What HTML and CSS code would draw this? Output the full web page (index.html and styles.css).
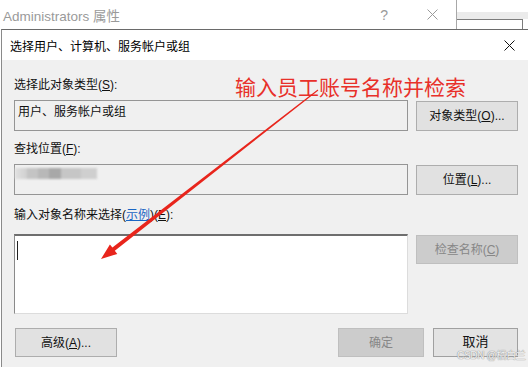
FILE: index.html
```html
<!DOCTYPE html>
<html lang="zh-CN">
<head>
    <meta charset="UTF-8">
    <meta name="viewport" content="width=device-width, initial-scale=1.0">
    <title>选择用户、计算机、服务帐户或组</title>
    <link rel="stylesheet" href="styles.css">
</head>
<body>
    <div class="screen">
        <!-- owner window behind the picker -->
        <div class="owner">
            <div class="owner-bar">
                <span class="owner-title">Administrators 属性</span>
                <span class="owner-help">?</span>
                <svg class="owner-close" width="11" height="11" viewBox="0 0 11 11">
                    <path d="M0.5 0.5 L10.5 10.5 M10.5 0.5 L0.5 10.5" stroke="#9a9a9a" stroke-width="1" fill="none"/>
                </svg>
            </div>
            <div class="owner-side">
                <div class="side-band"></div>
                <div class="side-frame"></div>
            </div>
        </div>

        <div class="dialog">
            <div class="dialog-title">
                <span>选择用户、计算机、服务帐户或组</span>
                <svg class="dialog-close" width="11" height="11" viewBox="0 0 11 11">
                    <path d="M0.5 0.5 L10.5 10.5 M10.5 0.5 L0.5 10.5" stroke="#111" stroke-width="1" fill="none"/>
                </svg>
            </div>

            <div class="dialog-body">
                <div class="field-label">选择此对象类型(<u>S</u>):</div>
                <div class="field-row">
                    <div class="text-box">用户、服务帐户或组</div>
                    <button type="button" class="side-button">对象类型(<u>O</u>)...</button>
                </div>

                <div class="field-label label-gap">查找位置(<u>F</u>):</div>
                <div class="field-row">
                    <div class="text-box"><span class="blurred"></span></div>
                    <button type="button" class="side-button">位置(<u>L</u>)...</button>
                </div>

                <div class="field-label label-gap-lg">输入对象名称来选择(<a href="#" class="link">示例</a>)(<u>E</u>):</div>
                <div class="field-row row-names">
                    <div class="name-area"><span class="caret"></span></div>
                    <button type="button" class="side-button check" disabled>检查名称(<u>C</u>)</button>
                </div>

                <div class="footer">
                    <button type="button" class="btn advanced">高级(<u>A</u>)...</button>
                    <button type="button" class="btn ok" disabled>确定</button>
                    <button type="button" class="btn cancel">取消</button>
                </div>
            </div>
        </div>

        <!-- red annotation drawn over the screenshot -->
        <div class="note">输入员工账号名称并检索</div>
        <svg class="arrow" width="528" height="367" viewBox="0 0 528 367">
            <polygon fill="#e8251c" points="317.7,89.6 112.4,247.6 109.9,244.5 101,259 117.3,253.9 114.8,250.8 318.3,90.4"/>
        </svg>

        <div class="watermark">CSDN @橘白兰</div>
    </div>
</body>
</html>
```

FILE: styles.css
```css
/* Windows object picker, on top of a properties window */
body {
    margin: 0;
    background-color: #fff;
    font-family: "Liberation Sans", "Noto Sans CJK SC", sans-serif;
    font-size: 12px;
    color: #111;
}
.screen {
    position: relative;
    width: 528px;
    height: 367px;
    overflow: hidden;
    background-color: #fff;
}

/* owner window */
.owner {
    display: flex;
    height: 29px;
}
.owner-bar {
    width: 457px;
    display: flex;
    align-items: center;
    padding-left: 3px;
    box-sizing: border-box;
    border-right: 1px solid #a8a8a8;
    color: #9a9a9a;
    font-size: 13.5px;
}
.owner-title {
    flex: 1;
}
.owner-help {
    font-size: 14px;
    margin-right: 39px;
}
.owner-close {
    margin-right: 18px;
}
.owner-side {
    flex: 1;
    padding-top: 12px;
}
.side-band {
    height: 7px;
    background-color: #ebebeb;
}
.side-frame {
    height: 9px;
    margin-right: 5px;
    border-top: 1px solid #7c7c7c;
    border-right: 1px solid #7c7c7c;
}

/* picker dialog */
.dialog {
    margin-left: 1px;
    border-top: 1px solid #6a6a6a;
    border-left: 1px solid #8a8a8a;
    height: 337px;
    display: flex;
    flex-direction: column;
}
.dialog-title {
    height: 30px;
    display: flex;
    align-items: center;
    padding: 0 13px 0 8px;
    background-color: #fff;
    font-family: "Noto Sans CJK SC", sans-serif;
    font-size: 12px;
    color: #000;
}
.dialog-title span {
    flex: 1;
}
.dialog-body {
    flex: 1;
    background-color: #f0f0f0;
    padding: 17px 10px 0 12px;
}
.field-label {
    height: 16px;
    line-height: 16px;
    color: #111;
}
.label-gap {
    margin-top: 10px;
}
.label-gap-lg {
    margin-top: 12px;
}
.link {
    color: #1a66c4;
    text-decoration: underline;
}
.field-row {
    display: flex;
    gap: 8px;
    margin-top: 7px;
    align-items: flex-start;
}
.row-names {
    margin-top: 11px;
}
.text-box {
    width: 394px;
    height: 31px;
    box-sizing: border-box;
    border: 1px solid #959595;
    padding: 3px 3px;
    line-height: 16px;
    background-color: #f0f0f0;
    color: #111;
}
.blurred {
    display: block;
    width: 82px;
    height: 11px;
    margin: 0 0 0 -3px;
    background: linear-gradient(90deg, #e0e0e0 0, #d0d0d0 12px, #c4c4c4 12px, #c4c4c4 23px, #b8b8b8 23px, #b8b8b8 34px, #a8a8a8 34px, #a8a8a8 46px, #c6c6c6 46px, #c6c6c6 66px, #cfcfcf 66px);
    filter: blur(1px);
}
.name-area {
    width: 394px;
    height: 80px;
    box-sizing: border-box;
    border-top: 2px solid #6e6e6e;
    border-left: 1px solid #8a8a8a;
    border-right: 1px solid #dcdcdc;
    border-bottom: 1px solid #dcdcdc;
    background-color: #fff;
    padding: 5px 0 0 2px;
}
.caret {
    display: block;
    width: 1px;
    height: 19px;
    background-color: #222;
}

/* buttons */
button {
    font-family: "Liberation Sans", "Noto Sans CJK SC", sans-serif;
    font-size: 12px;
    line-height: 14px;
    color: #111;
    background-color: #e1e1e1;
    border: 1px solid #adadad;
    padding: 0;
    box-sizing: border-box;
}
button:disabled {
    background-color: #cccccc;
    border-color: #bfbfbf;
    color: #878787;
}
.side-button {
    width: 102px;
    height: 30px;
    margin-top: 1px;
}
.check {
    height: 29px;
}
.footer {
    display: flex;
    margin-top: 14px;
}
.btn {
    height: 29px;
}
.advanced {
    width: 102px;
    margin-left: 1px;
}
.ok {
    width: 86px;
    margin-left: auto;
}
.cancel {
    width: 85px;
    margin-left: 9px;
    border-color: #a0a0a0;
    background-color: #e3e3e3;
    font-size: 13px;
    padding-bottom: 2px;
}

/* annotation overlay */
.note {
    position: absolute;
    left: 235px;
    top: 72px;
    font-family: "Noto Sans CJK SC", sans-serif;
    font-size: 21px;
    line-height: 28px;
    color: #e8302a;
    white-space: nowrap;
}
.arrow {
    position: absolute;
    left: 0;
    top: 0;
}
.watermark {
    position: absolute;
    left: 457px;
    top: 351px;
    font-size: 10px;
    line-height: 10px;
    letter-spacing: -0.3px;
    color: rgba(255, 255, 255, 0.9);
    text-shadow: 0 0 1px #8a8a8a, 0 0 1px #8a8a8a;
    white-space: nowrap;
}
```
